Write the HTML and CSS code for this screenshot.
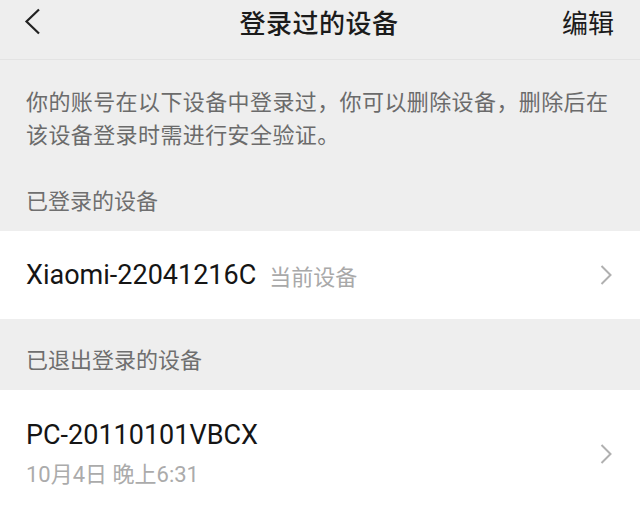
FILE: index.html
```html
<!DOCTYPE html>
<html lang="zh-CN">
<head>
    <meta charset="UTF-8" />
    <meta name="viewport" content="width=device-width, initial-scale=1.0" />
    <title>登录过的设备</title>
    <link rel="stylesheet" href="styles.css">
</head>
<body>
    <div class="header">
        <span class="back">
            <svg width="18" height="28" viewBox="0 0 18 28">
                <polyline points="15,1.5 2.5,13.5 15,25.5" fill="none" stroke="#222" stroke-width="2.2" />
            </svg>
        </span>
        <h1 class="title">登录过的设备</h1>
        <span class="edit">编辑</span>
    </div>

    <p class="desc">你的账号在以下设备中登录过，你可以删除设备，删除后在该设备登录时需进行安全验证。</p>

    <div class="section-title">已登录的设备</div>
    <div class="row">
        <div class="info">
            <span class="name">Xiaomi-22041216C</span>
            <span class="tag">当前设备</span>
        </div>
        <svg class="arrow" width="12" height="20" viewBox="0 0 12 20">
            <polyline points="1.5,1 10.5,10 1.5,19" fill="none" stroke="#b0b0b0" stroke-width="2" />
        </svg>
    </div>

    <div class="section-title">已退出登录的设备</div>
    <div class="row row-tall">
        <div class="info info-stack">
            <span class="name">PC-20110101VBCX</span>
            <span class="time">10月4日 晚上6:31</span>
        </div>
        <svg class="arrow" width="12" height="20" viewBox="0 0 12 20">
            <polyline points="1.5,1 10.5,10 1.5,19" fill="none" stroke="#b0b0b0" stroke-width="2" />
        </svg>
    </div>
</body>
</html>
```

FILE: styles.css
```css
body {
    margin: 0;
    background: #eeeeee;
    font-family: Roboto, "Noto Sans CJK SC", sans-serif;
    color: #1b1b1b;
}
.header {
    height: 43px;
    padding: 0 26px 16px 24px;
    display: flex;
    align-items: center;
    justify-content: space-between;
    border-bottom: 1px solid #e3e3e3;
}
.back {
    display: flex;
    width: 60px;
}
.title {
    margin: 0;
    font-size: 26px;
    font-weight: 500;
    letter-spacing: 0.5px;
}
.edit {
    width: 60px;
    text-align: right;
    font-size: 26px;
}
.desc {
    margin: 0;
    padding: 26px 26px 8px;
    font-size: 22px;
    line-height: 33px;
    letter-spacing: 0.4px;
    color: #6b6b6b;
}
.section-title {
    padding: 25px 26px 13px;
    font-size: 22px;
    line-height: 33px;
    color: #6f6f6f;
}
.row {
    background: #ffffff;
    height: 88px;
    padding: 0 28px 0 26px;
    display: flex;
    align-items: center;
    justify-content: space-between;
}
.row-tall {
    height: auto;
    padding-top: 24px;
    padding-bottom: 20px;
}
.info {
    display: flex;
    align-items: center;
}
.info-stack {
    flex-direction: column;
    align-items: flex-start;
}
.name {
    font-size: 27px;
    color: #151515;
}
.info-stack .name {
    line-height: 42px;
}
.tag {
    margin-left: 13px;
    font-size: 22px;
    color: #a9a9a9;
}
.time {
    font-size: 22px;
    line-height: 38px;
    color: #ababab;
}
.arrow {
    flex-shrink: 0;
}
```
